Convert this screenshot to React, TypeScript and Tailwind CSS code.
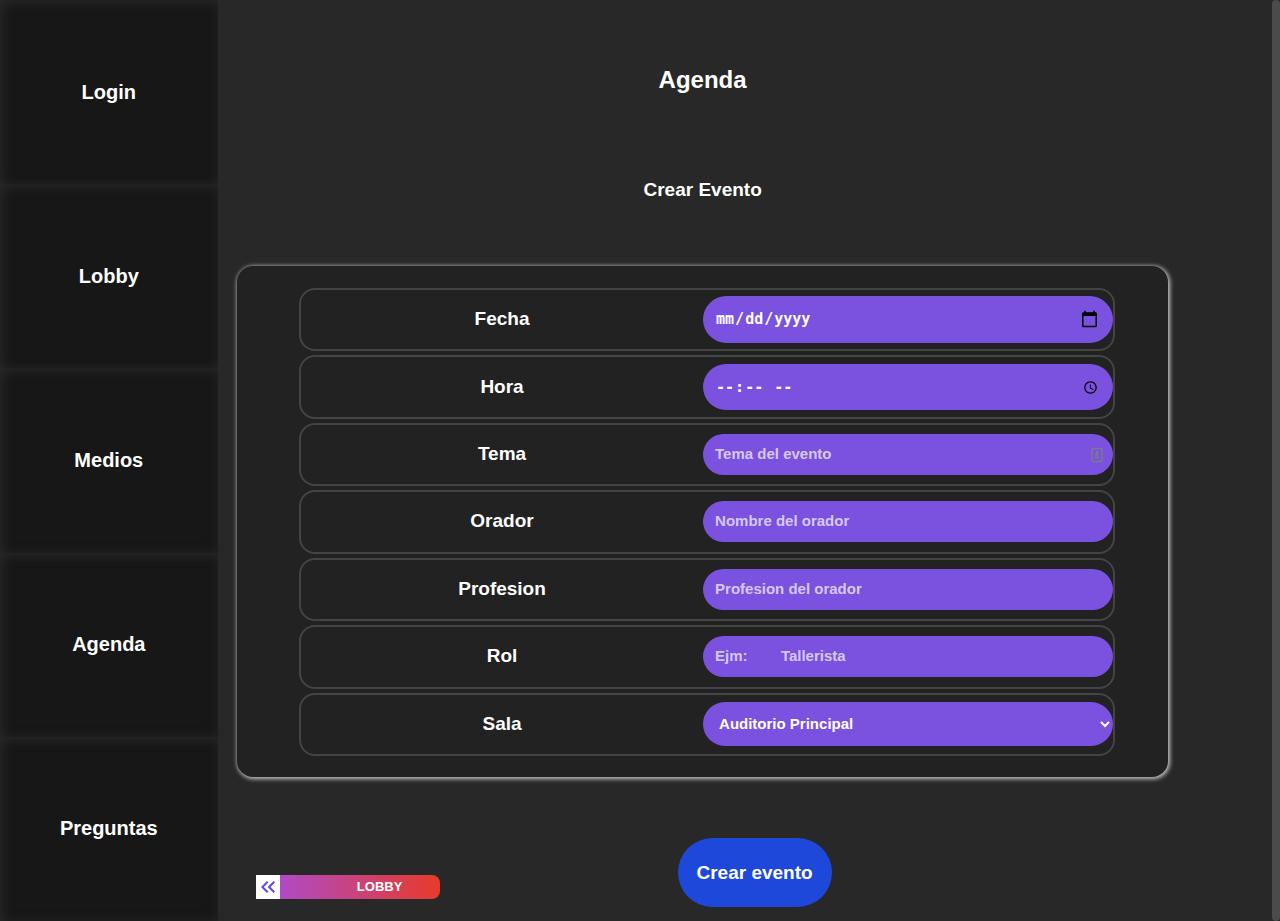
import type { ComponentProps } from "react";
import { MdKeyboardDoubleArrowLeft } from "react-icons/md";

const sections = ["Login", "Lobby", "Medios", "Agenda", "Preguntas"];

const fieldStyle =
  "w-full rounded-full bg-[#7b51df] text-[15px] font-bold text-white outline-none placeholder:text-white/70";

const textStyle = "h-[41px] px-3 pb-0.5";

const pickerStyle = "px-3 font-['DejaVu_Sans_Mono',monospace]";

function Row({ id, label, children }: ComponentProps<"div"> & { label: string }) {
  return (
    <div className="grid grid-cols-[49.5%_50.5%] items-center rounded-2xl border-2 border-[#444]">
      <label htmlFor={id} className="pb-px text-center text-[19px] leading-6 font-bold">
        {label}
      </label>
      <div className="relative flex items-center">{children}</div>
    </div>
  );
}

function ContactIcon() {
  return (
    <svg
      className="absolute right-[10px] h-4 w-3"
      viewBox="0 0 12 16"
      fill="none"
      stroke="#7d7a8c"
      aria-hidden="true"
    >
      <rect x="1" y="1.5" width="10" height="13" rx="1" strokeWidth="1.5" />
      <circle cx="6" cy="5" r="1.2" fill="#7d7a8c" stroke="none" />
      <path d="M6 5L3.8 8.5h4.4z" fill="#7d7a8c" stroke="none" />
      <path d="M4 10.5h4" strokeWidth="2" />
    </svg>
  );
}

export default function App() {
  return (
    <div className="flex min-h-screen bg-[#282828] font-['Liberation_Sans',Arial,sans-serif] text-white">
      <nav className="flex w-[17%] shrink-0 flex-col">
        {sections.map((name) => (
          <a
            key={name}
            href={`#${name.toLowerCase()}`}
            className="flex flex-1 items-center justify-center bg-[#171717] text-xl leading-[29px] font-bold shadow-[inset_2px_2px_12px_#2a2a2a]"
          >
            {name}
          </a>
        ))}
      </nav>

      <main className="min-w-0 flex-1">
        <div className="flex w-[92%] flex-col items-center">
          <h1 className="mt-16 text-2xl leading-8 font-bold">Agenda</h1>
          <h2 className="mt-[82px] text-[19px] leading-6 font-bold">Crear Evento</h2>

          <form
            id="evento"
            className="mt-16 w-[96%] rounded-2xl bg-[#222] pt-[22px] pr-[53px] pb-[21px] pl-[62px] shadow-[1px_1px_4px_1px_#c4c4c4]"
          >
            <div className="grid h-[468px] auto-rows-fr gap-1">
              <Row id="fecha" label="Fecha">
                <input
                  id="fecha"
                  type="date"
                  className={`${fieldStyle} ${pickerStyle} h-[47px] [&::-webkit-calendar-picker-indicator]:size-[19px]`}
                />
              </Row>
              <Row id="hora" label="Hora">
                <input
                  id="hora"
                  type="time"
                  className={`${fieldStyle} ${pickerStyle} h-[46px] [&::-webkit-calendar-picker-indicator]:size-[15px]`}
                />
              </Row>
              <Row id="tema" label="Tema">
                <input id="tema" type="text" placeholder="Tema del evento" className={`${fieldStyle} ${textStyle}`} />
                <ContactIcon />
              </Row>
              <Row id="orador" label="Orador">
                <input id="orador" type="text" placeholder="Nombre del orador" className={`${fieldStyle} ${textStyle}`} />
              </Row>
              <Row id="profesion" label="Profesion">
                <input id="profesion" type="text" placeholder="Profesion del orador" className={`${fieldStyle} ${textStyle}`} />
              </Row>
              <Row id="rol" label="Rol">
                <input
                  id="rol"
                  type="text"
                  placeholder={"Ejm:\u00a0\u00a0\u00a0\u00a0\u00a0\u00a0\u00a0\u00a0Tallerista"}
                  className={`${fieldStyle} ${textStyle}`}
                />
              </Row>
              <Row id="sala" label="Sala">
                <select id="sala" className={`${fieldStyle} h-11 pb-0.5 pl-3`}>
                  <option>Auditorio Principal</option>
                </select>
              </Row>
            </div>
          </form>
        </div>

        <div className="mt-[61px] mb-3 flex items-end pl-[38px]">
          <a
            href="#lobby"
            className="mb-2 flex h-6 w-[184px] items-center overflow-hidden rounded-r-lg bg-linear-[80deg] from-[#a64dde] to-[#e83a28] text-[13px] font-bold"
          >
            <span className="bg-white text-[#6547de]">
              <MdKeyboardDoubleArrowLeft size={24} aria-hidden="true" />
            </span>
            <span className="flex-1 pl-10 text-center">LOBBY</span>
          </a>
          <button
            type="submit"
            form="evento"
            className="ml-[238px] h-[69px] w-[154px] rounded-full bg-[#1e48d9] pt-0.5 text-[19px] font-bold"
          >
            Crear evento
          </button>
        </div>
      </main>

      <div className="w-2 shrink-0 rounded bg-[#4b4b4b]" />
    </div>
  );
}
